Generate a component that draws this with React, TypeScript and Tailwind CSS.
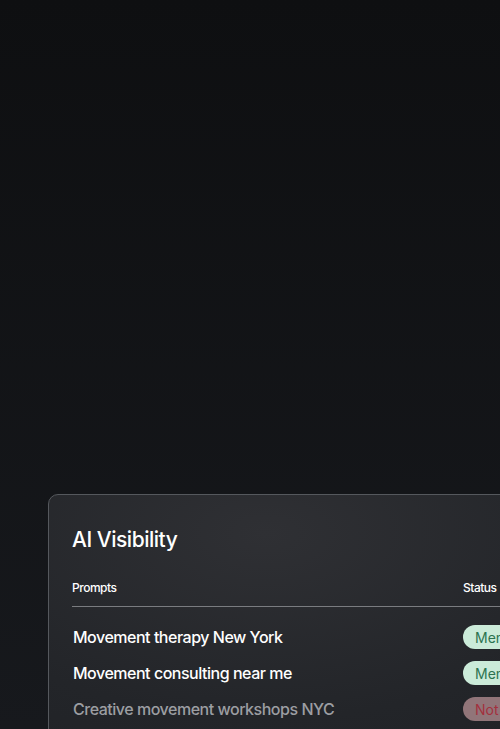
const rows = [
  { prompt: 'Movement therapy New York', status: 'Mentioned', ok: true },
  { prompt: 'Movement consulting near me', status: 'Mentioned', ok: true },
  { prompt: 'Creative movement workshops NYC', status: 'Not mentioned', ok: false },
]

export default function App() {
  return (
    <div
      className="h-[729px] w-[500px] overflow-hidden bg-gradient-to-b from-[#0e0f11] to-[#17191d] pl-12 pt-[494px]"
      style={{ fontFamily: 'Inter, "Noto Sans", sans-serif' }}
    >
      <div className="w-[620px] rounded-[10px] border border-[#55585d] bg-[radial-gradient(ellipse_at_35%_15%,#2f3034,#232529_60%,#1f2125)] pl-[23px] pt-[31px] pb-6 tracking-[-0.03em]">
        <h2 className="text-[21px] font-medium leading-7 text-white">AI Visibility</h2>

        {/* Table header */}
        <div className="mt-[26px] grid grid-cols-[391px_1fr] border-b border-[#7a7c80] pb-[10px] text-[12px] font-medium leading-4 text-white">
          <span>Prompts</span>
          <span>Status</span>
        </div>

        <div className="pt-3">
          {rows.map(r => (
            <div key={r.prompt} className="grid h-9 grid-cols-[391px_1fr] items-center">
              <span className={`pl-px text-[16px] font-medium ${r.ok ? 'text-white' : 'text-[#9c9ea2]'}`}>{r.prompt}</span>
              <span
                className={`inline-flex h-6 w-fit items-center whitespace-nowrap rounded-full px-3 text-[14px] tracking-normal ${
                  r.ok ? 'bg-[#cbebd9] text-[#2c7350]' : 'bg-[#917579] text-[#a3303d]'
                }`}
              >
                {r.status}
              </span>
            </div>
          ))}
        </div>
      </div>
    </div>
  )
}
